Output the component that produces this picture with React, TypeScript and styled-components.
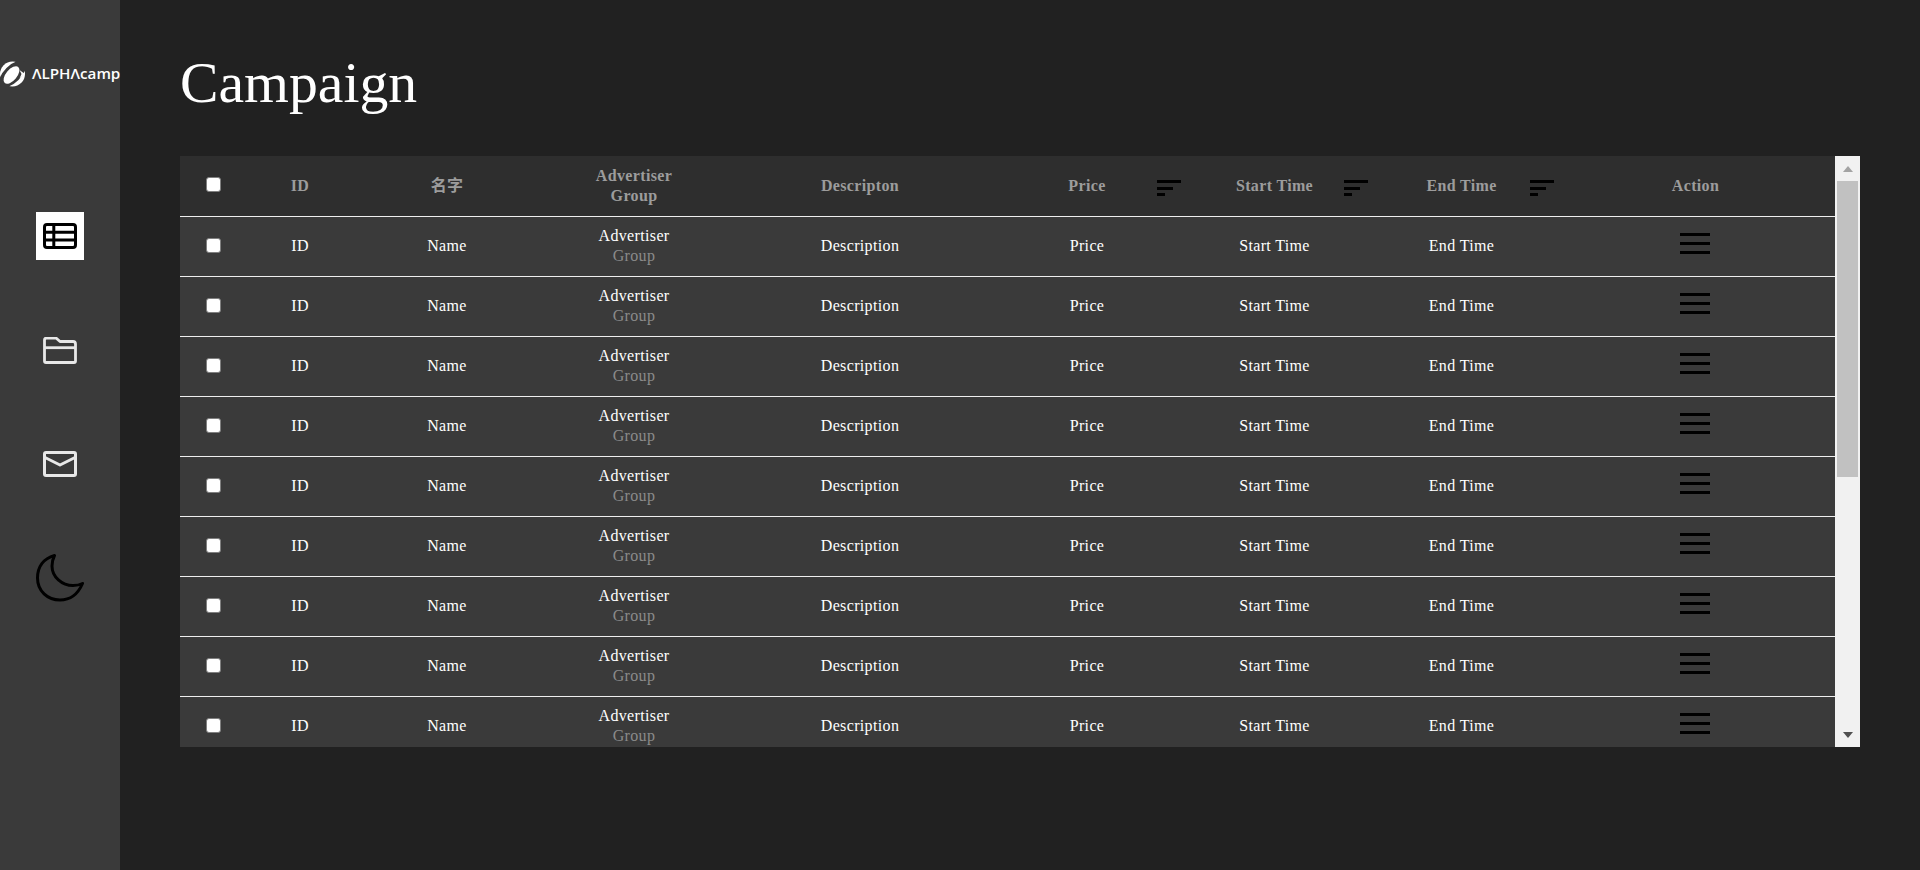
import * as React from 'react';
import styled, { createGlobalStyle } from 'styled-components';

const ROW_COUNT = 9;

const GlobalStyle = createGlobalStyle`
	html, body {
		margin: 0;
		height: 100%;
		background: #212121;
		font-family: "Liberation Serif", "Noto Sans CJK SC", serif;
		font-size: 16px;
		color: #fff;
	}
`;

const Page = styled.div`
	display: flex;
	height: 870px;
	overflow: hidden;
`;

const Sidebar = styled.nav`
	width: 120px;
	flex: none;
	background: #3a3a3a;
	display: flex;
	flex-direction: column;
	align-items: center;
	padding-top: 60px;
	box-sizing: border-box;
`;

const Logo = styled.div`
	width: 120px;
	height: 28px;
	display: flex;
	align-items: center;
	font-family: "Open Sans", sans-serif;
	font-size: 15.2px;
	line-height: 26px;
	font-weight: 600;
	color: #fff;
	white-space: nowrap;
	margin-bottom: 124px;

	svg {
		flex: none;
		margin-right: 7px;
	}
`;

const LogoText = styled.span`
	margin-top: -2px;
`;

const NavItem = styled.div<{ $active?: boolean }>`
	width: 48px;
	height: 48px;
	margin-bottom: 66px;
	display: flex;
	align-items: center;
	justify-content: center;
	background: ${props => (props.$active ? '#fff' : 'transparent')};
	color: ${props => (props.$active ? '#000' : '#e8e8e8')};
`;

const Main = styled.main`
	flex: 1;
	padding: 0 60px;
	min-width: 0;
`;

const Title = styled.h1`
	margin: 0;
	padding-top: 50px;
	height: 106px;
	font-size: 57.7px;
	line-height: 66px;
	font-weight: 400;
`;

const TableFrame = styled.div`
	display: flex;
	height: 591px;
`;

const TableArea = styled.div`
	flex: 1;
	min-width: 0;
	overflow: hidden;
	background: #3a3a3a;
`;

const ScrollBar = styled.div`
	width: 25px;
	flex: none;
	background: #f1f1f1;
	display: flex;
	flex-direction: column;
	align-items: center;
`;

const ScrollButton = styled.div`
	height: 25px;
	width: 100%;
	flex: none;
	display: flex;
	align-items: center;
	justify-content: center;
`;

const ArrowUp = styled.span`
	width: 0;
	height: 0;
	border-left: 5.5px solid transparent;
	border-right: 5.5px solid transparent;
	border-bottom: 6px solid #a3a3a3;
`;

const ArrowDown = styled.span`
	width: 0;
	height: 0;
	border-left: 5.5px solid transparent;
	border-right: 5.5px solid transparent;
	border-top: 6px solid #505050;
`;

const ScrollThumb = styled.div`
	width: 21px;
	height: 296px;
	flex: none;
	background: #c1c1c1;
`;

const ScrollSpacer = styled.div`
	flex: 1;
`;

const Table = styled.table`
	width: 100%;
	table-layout: fixed;
	border-collapse: collapse;
`;

const HeadRow = styled.tr`
	height: 60px;
	background: #2e2e2e;
	color: #9c9c9c;
	border-bottom: 1px solid #eee;
`;

const HeadCell = styled.th`
	position: relative;
	padding: 0;
	font-size: 16px;
	line-height: 20px;
	font-weight: 700;
	letter-spacing: 0.35px;
	text-align: center;
	box-sizing: border-box;
`;

const Row = styled.tr`
	height: 60px;
	border-bottom: 1px solid #eee;
`;

const Cell = styled.td`
	padding: 0;
	font-size: 16px;
	line-height: 20px;
	letter-spacing: 0.35px;
	text-align: center;
`;

const Check = styled.input.attrs({ type: 'checkbox' })`
	display: block;
	width: 15px;
	height: 15px;
	margin: -2px auto 0;
	appearance: none;
	background: #fff;
	border: 1px solid #808080;
	border-radius: 3px;
	box-sizing: border-box;
`;

const SubText = styled.div`
	color: #8a8a8a;
`;

const SortButton = styled.span<{ $left: number }>`
	position: absolute;
	top: 24px;
	left: ${props => props.$left}px;
	width: 24px;
	height: 16px;
	display: block;

	svg {
		display: block;
	}
`;

const MenuButton = styled.div`
	width: 30px;
	margin: -6px auto 0;
	position: relative;
	left: -1px;

	svg {
		display: block;
	}
`;

const SortIcon = ({ left }: { left: number }) => (
	<SortButton $left={left}>
		<svg width="24" height="16" viewBox="0 0 24 16" fill="#000">
			<rect x="0" y="0" width="24" height="3" />
			<rect x="0" y="7" width="16" height="3" />
			<rect x="0" y="13" width="8" height="3" />
		</svg>
	</SortButton>
);

const MenuIcon = () => (
	<MenuButton>
		<svg width="30" height="21" viewBox="0 0 30 21" fill="#000">
			<rect x="0" y="0" width="30" height="3" />
			<rect x="0" y="9" width="30" height="3" />
			<rect x="0" y="18" width="30" height="3" />
		</svg>
	</MenuButton>
);

const LogoMark = () => (
	<svg width="25" height="26" viewBox="0 0 25 26">
		<circle cx="12.5" cy="13" r="12.5" fill="#fff" />
		<ellipse cx="12.5" cy="13" rx="17" ry="8.500" transform="rotate(-45 12.500 13)" fill="#3a3a3a" />
		<ellipse cx="11.500" cy="14" rx="10.500" ry="5.500" transform="rotate(-50 11.500 14)" fill="#fff" />
		<path d="M19.500 9 25 13l-5.500 4.500 2-4.500Z" fill="#fff" />
	</svg>
);

const TableIcon = () => (
	<svg width="34" height="26" viewBox="0 0 34 26" fill="none" stroke="#000" strokeWidth="3">
		<rect x="1.500" y="1.500" width="31" height="23" rx="2.500" />
		<path d="M1.500 9.300h31M1.500 17h31" strokeWidth="3" />
		<path d="M10.800 1.500v23" strokeWidth="3" />
	</svg>
);

const FolderIcon = () => (
	<svg width="34" height="27" viewBox="0 0 34 27" fill="none" stroke="currentColor" strokeWidth="2.800" strokeLinejoin="round">
		<path d="M1.500 24V3a2 2 0 0 1 2-2h9.500l4 3.500h13a2.500 2.500 0 0 1 2.500 2.500V24a1.500 1.500 0 0 1-1.500 1.500H3a1.500 1.500 0 0 1-1.500-1.500Z" />
		<path d="M1.500 10.700h31" />
	</svg>
);

const MailIcon = () => (
	<svg width="34" height="26" viewBox="0 0 34 26" fill="none" stroke="currentColor" strokeWidth="3" strokeLinejoin="round">
		<rect x="1.500" y="1.500" width="31" height="23" rx="1.500" />
		<path d="M2 6.500 17 14 32 6.500" />
	</svg>
);

const MoonIcon = () => (
	<svg width="48" height="48" viewBox="0 0 48 48" fill="none" stroke="#000" strokeWidth="3" strokeLinejoin="round">
		<path d="M18.500 1.500C7.500 4.500 1.500 13 1.500 24c0 13 10 22 22.500 22 10.500 0 18-6 22.500-16.500-3 1.500-6 2-9.500 2C26 31.500 16 23 16 12c0-4 1-7.500 2.500-10.500Z" />
	</svg>
);

const columns = [66, 108, 186, 188, 264, 190, 185, 189, 279];

const App = () => {
	const rows = Array.from({ length: ROW_COUNT }, (_, i) => i);

	return (
		<Page>
			<GlobalStyle />
			<Sidebar>
				<Logo><LogoMark /><LogoText>ΛLPHΛcamp</LogoText></Logo>
				<NavItem $active><TableIcon /></NavItem>
				<NavItem><FolderIcon /></NavItem>
				<NavItem><MailIcon /></NavItem>
				<NavItem><MoonIcon /></NavItem>
			</Sidebar>
			<Main>
				<Title>Campaign</Title>
				<TableFrame>
					<TableArea>
						<Table>
							<colgroup>
								{columns.map((w, i) => <col key={i} width={w} />)}
							</colgroup>
							<thead>
								<HeadRow>
									<HeadCell><Check /></HeadCell>
									<HeadCell>ID</HeadCell>
									<HeadCell>名字</HeadCell>
									<HeadCell>Advertiser<br />Group</HeadCell>
									<HeadCell>Descripton</HeadCell>
									<HeadCell>Price<SortIcon left={165} /></HeadCell>
									<HeadCell>Start Time<SortIcon left={162} /></HeadCell>
									<HeadCell>End Time<SortIcon left={163} /></HeadCell>
									<HeadCell>Action</HeadCell>
								</HeadRow>
							</thead>
							<tbody>
								{rows.map(i => (
									<Row key={i}>
										<Cell><Check /></Cell>
										<Cell>ID</Cell>
										<Cell>Name</Cell>
										<Cell>Advertiser<SubText>Group</SubText></Cell>
										<Cell>Description</Cell>
										<Cell>Price</Cell>
										<Cell>Start Time</Cell>
										<Cell>End Time</Cell>
										<Cell><MenuIcon /></Cell>
									</Row>
								))}
							</tbody>
						</Table>
					</TableArea>
					<ScrollBar>
						<ScrollButton><ArrowUp /></ScrollButton>
						<ScrollThumb />
						<ScrollSpacer />
						<ScrollButton><ArrowDown /></ScrollButton>
					</ScrollBar>
				</TableFrame>
			</Main>
		</Page>
	);
};

export default App;
